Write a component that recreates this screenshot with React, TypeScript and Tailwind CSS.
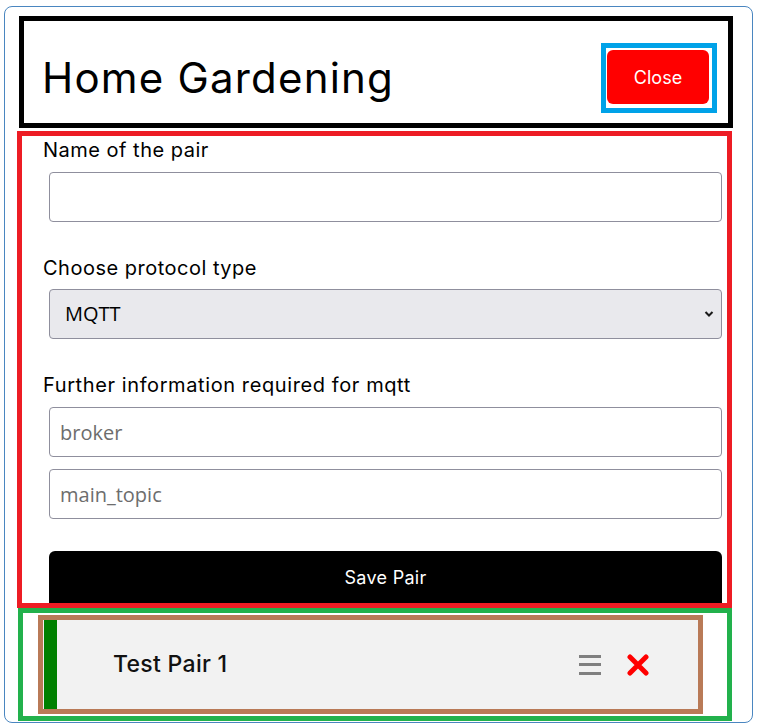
import { useState } from 'react';

const poppins = { fontFamily: 'Inter, "Noto Sans", sans-serif' };
const segoe = { fontFamily: '"Open Sans", "Noto Sans", sans-serif' };

const PairRow = ({ name }: { name: string }) => (
  <div className="ml-[15px] mt-[2px] flex h-[99px] w-[665px] border-[5px] border-[#b97a57] bg-[#f2f2f2]">
    <div className="ml-[1px] w-[13px] bg-[#008000]" />
    <div className="flex flex-1 items-center pl-[56px] pr-[49px]">
      <span className="flex-1 text-[23px] font-medium tracking-[0.3px] text-[#111]" style={poppins}>{name}</span>
      <button className="flex h-[22px] w-[22px] flex-col justify-between py-[1px]">
        <span className="h-[3px] w-full bg-[#808080]" />
        <span className="h-[3px] w-full bg-[#808080]" />
        <span className="h-[3px] w-full bg-[#808080]" />
      </button>
      <button className="ml-[26px]">
        <svg width="22" height="22" viewBox="0 0 22 22">
          <path d="M3 3 L19 19 M19 3 L3 19" stroke="#ff0000" strokeWidth="5" strokeLinecap="round" />
        </svg>
      </button>
    </div>
  </div>
);

export default function App() {
  const [name, setName] = useState('');
  const [protocol, setProtocol] = useState('mqtt');
  const [broker, setBroker] = useState('');
  const [topic, setTopic] = useState('');

  return (
    <div className="bg-white px-[4px] pt-[6px]" style={poppins}>
      <div className="h-[717px] w-[749px] rounded-[8px] border border-[#4a86c0]">
        {/* header */}
        <div className="ml-[14px] mt-[9px] flex h-[112px] w-[714px] items-start justify-between border-[5px] border-black">
          <h1 className="ml-[18px] mt-[31px] text-[42px] leading-[52px] font-normal tracking-[1.2px] text-black">Home Gardening</h1>
          <div className="mr-[11px] mt-[22px] border-[5px] border-[#00a2e8] pb-[4px] pl-[1px] pr-[3px] pt-[2px]">
            <button className="flex h-[54px] w-[102px] items-center justify-center rounded-[6px] bg-[#ff0000] text-[18px] text-white">
              Close
            </button>
          </div>
        </div>

        {/* form */}
        <div className="ml-[12px] mt-[3px] w-[715px] border-[5px] border-[#ed1c24] pt-[1px]">
          <label className="block pl-[21px] text-[20px] leading-[27px] tracking-[0.5px] text-black">Name of the pair</label>
          <input
            value={name}
            onChange={(e) => setName(e.target.value)}
            className="ml-[27px] mt-[8px] block h-[50px] w-[673px] rounded-[4px] border border-[#8f8f9d] bg-white px-[10px] text-[20px] outline-none"
            style={segoe}
          />

          <label className="mt-[33px] block pl-[21px] text-[20px] leading-[27px] tracking-[0.5px] text-black">Choose protocol type</label>
          <div className="relative ml-[27px] mt-[7px] w-[673px]">
            <select
              value={protocol}
              onChange={(e) => setProtocol(e.target.value)}
              className="block h-[50px] w-full appearance-none rounded-[4px] border border-[#8f8f9d] bg-[#e9e9ed] pl-[15px] text-[20px] text-black outline-none"
              style={segoe}
            >
              <option value="mqtt">MQTT</option>
              <option value="http">HTTP</option>
            </select>
            <svg className="pointer-events-none absolute right-[8px] top-[21px]" width="10" height="8" viewBox="0 0 10 8">
              <path d="M1.5 2 L5 5.5 L8.5 2" fill="none" stroke="#1a1a1a" strokeWidth="2" />
            </svg>
          </div>

          <label className="mt-[33px] block pl-[21px] text-[20px] leading-[27px] tracking-[0.6px] text-black">
            Further information required for {protocol}
          </label>
          <input
            value={broker}
            onChange={(e) => setBroker(e.target.value)}
            placeholder="broker"
            className="ml-[27px] mt-[8px] block h-[50px] w-[673px] rounded-[4px] border border-[#8f8f9d] bg-white px-[10px] text-[20px] outline-none placeholder:text-[#6d6d6d]"
            style={segoe}
          />
          <input
            value={topic}
            onChange={(e) => setTopic(e.target.value)}
            placeholder="main_topic"
            className="ml-[27px] mt-[12px] block h-[50px] w-[673px] rounded-[4px] border border-[#8f8f9d] bg-white px-[10px] text-[20px] outline-none placeholder:text-[#6d6d6d]"
            style={segoe}
          />

          <button className="ml-[27px] mt-[32px] block h-[52px] w-[673px] rounded-t-[6px] bg-black text-[18px] tracking-[0.3px] text-white">
            Save Pair
          </button>
        </div>

        {/* pairs */}
        <div className="ml-[13px] h-[113px] w-[714px] border-[5px] border-[#22b14c]">
          <PairRow name="Test Pair 1" />
        </div>
      </div>
    </div>
  );
}
